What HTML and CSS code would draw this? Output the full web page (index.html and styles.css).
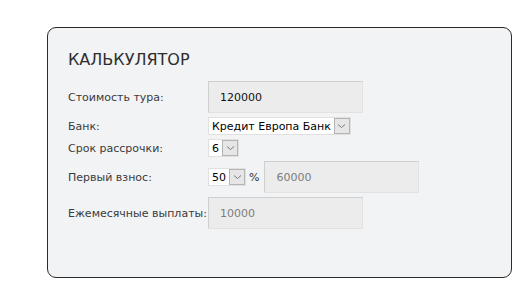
FILE: index.html
```html
<!DOCTYPE html>
<html lang="ru">
<head>
  <meta charset="UTF-8" />
  <title>Калькулятор</title>
  <link rel="stylesheet" href="styles.css">
</head>
<body>

  <div class="calc">
    <h2 class="calc-title">КАЛЬКУЛЯТОР</h2>

    <div class="row">
      <label class="label">Стоимость тура:</label>
      <div class="field">120000</div>
    </div>

    <div class="row">
      <label class="label">Банк:</label>
      <div class="select">
        <span class="select-value">Кредит Европа Банк</span>
        <span class="select-btn"><svg width="9" height="6" viewBox="0 0 9 6"><path d="M1 1.5 L4.5 4.5 L8 1.5" fill="none" stroke="#7a7a7a" stroke-width="1"/></svg></span>
      </div>
    </div>

    <div class="row">
      <label class="label">Срок рассрочки:</label>
      <div class="select">
        <span class="select-value">6</span>
        <span class="select-btn"><svg width="9" height="6" viewBox="0 0 9 6"><path d="M1 1.5 L4.5 4.5 L8 1.5" fill="none" stroke="#7a7a7a" stroke-width="1"/></svg></span>
      </div>
    </div>

    <div class="row">
      <label class="label">Первый взнос:</label>
      <div class="select">
        <span class="select-value">50</span>
        <span class="select-btn"><svg width="9" height="6" viewBox="0 0 9 6"><path d="M1 1.5 L4.5 4.5 L8 1.5" fill="none" stroke="#7a7a7a" stroke-width="1"/></svg></span>
      </div>
      <span class="percent">%</span>
      <div class="field field-muted">60000</div>
    </div>

    <div class="row">
      <label class="label">Ежемесячные выплаты:</label>
      <div class="field field-muted">10000</div>
    </div>
  </div>

</body>
</html>
```

FILE: styles.css
```css
* {
  box-sizing: border-box;
}

body {
  margin: 0;
  background: #fff;
  font-family: 'DejaVu Sans', Verdana, sans-serif;
  font-size: 11px;
  color: #333;
}

.calc {
  margin: 27px 0 0 47px;
  width: 465px;
  height: 251px;
  padding: 22px 0 0 20px;
  background: #f2f3f5;
  border: 1px solid #2b2b2b;
  border-radius: 9px;
}

.calc-title {
  margin: 0 0 11px;
  font-family: 'DejaVu Sans', Verdana, sans-serif;
  font-size: 16px;
  font-weight: normal;
  color: #2e2e2e;
  line-height: 20px;
}

.row {
  display: flex;
  align-items: center;
  margin-bottom: 4px;
}

.label {
  width: 140px;
  flex-shrink: 0;
  color: #3a3a3a;
}

.field {
  width: 155px;
  height: 32px;
  padding-left: 11px;
  display: flex;
  align-items: center;
  background: #ececec;
  border: 1px solid #e2e2e2;
  border-top-color: #cfcfcf;
  border-left-color: #cfcfcf;
  color: #111;
}

.field-muted {
  color: #7d7d7d;
}

.select {
  display: flex;
  align-items: center;
  height: 18px;
  background: #fff;
  border: 1px solid #e0e0e0;
  color: #000;
}

.select-value {
  padding: 0 3px;
}

.select-btn {
  width: 16px;
  height: 16px;
  display: flex;
  align-items: center;
  justify-content: center;
  background: #e6e6e6;
  border: 1px solid #b5b5b5;
}

.percent {
  margin: 0 5px 0 3px;
  color: #333;
}
```
